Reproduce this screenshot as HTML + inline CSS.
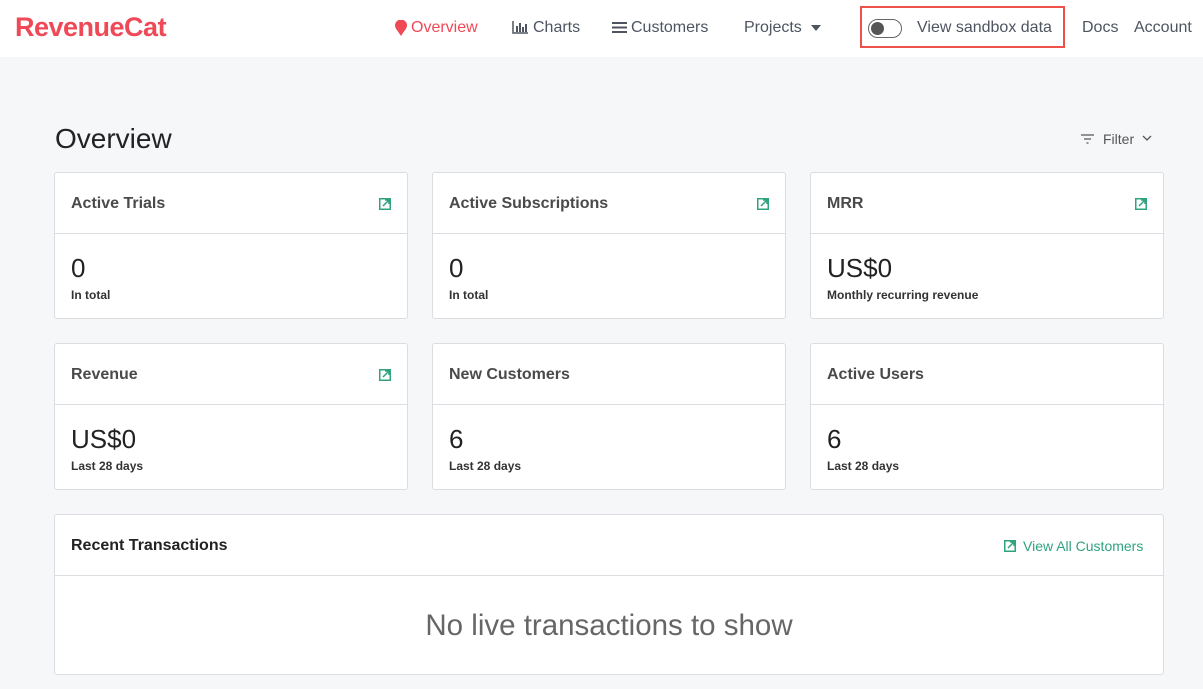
<!DOCTYPE html>
<html><head><style>
*{box-sizing:border-box;margin:0;padding:0}
body{width:1203px;height:689px;overflow:hidden;background:#f6f7f9;font-family:"Liberation Sans",sans-serif;color:#222;position:relative}
.nav{position:absolute;left:0;top:0;width:1203px;height:57px;background:#fff}
.nav span{position:absolute;top:19px;font-size:16px;color:#4e5561}
.logo{position:absolute;left:15px;top:12px;font-size:27px;font-weight:bold;color:#ef4957;letter-spacing:-0.5px}
.sb{position:absolute;left:860px;top:6px;width:205px;height:42px;border:2px solid #f0504a}
.tog{position:absolute;left:868px;top:19px;width:34px;height:19px;border:1px solid #666;border-radius:10px}
.tog i{position:absolute;left:2px;top:2px;width:13px;height:13px;border-radius:50%;background:#555}
h1{position:absolute;left:55px;top:123px;font-size:28px;font-weight:normal;color:#222}
.card{position:absolute;background:#fff;border:1px solid #dcdde0;border-radius:3px}
.card .h{height:61px;border-bottom:1px solid #dcdde0;padding:22px 16px;font-size:16px;font-weight:bold;color:#4a4a4a}
.card .v{position:absolute;left:16px;top:80px;font-size:26px;color:#222}
.card .s{position:absolute;left:16px;top:115px;font-size:12px;font-weight:bold;color:#333}
.ic{position:absolute;right:16px;top:25px;width:12px;height:12px}
</style></head><body>
<div class="nav">
<div class="logo">RevenueCat</div>
<svg style="position:absolute;left:395px;top:20px" width="12" height="16"><path d="M6 16C3 11 0 8.5 0 5.5A6 6 0 0 1 12 5.5C12 8.5 9 11 6 16Z" fill="#ef4957"/></svg>
<span style="left:411px;color:#ef4957">Overview</span>
<svg style="position:absolute;left:512px;top:21px" width="16" height="13"><path d="M1 0v12h15" stroke="#4e5561" stroke-width="1.5" fill="none"/><rect x="4" y="5" width="2" height="6" fill="#4e5561"/><rect x="7" y="2" width="2" height="9" fill="#4e5561"/><rect x="10" y="6" width="2" height="5" fill="#4e5561"/><rect x="13" y="3" width="2" height="8" fill="#4e5561"/></svg>
<span style="left:533px">Charts</span>
<svg style="position:absolute;left:612px;top:21px" width="15" height="13"><path d="M0 2h15M0 6.5h15M0 11h15" stroke="#4e5561" stroke-width="2"/></svg>
<span style="left:631px">Customers</span>
<span style="left:744px">Projects</span>
<svg style="position:absolute;left:811px;top:25px" width="10" height="6"><path d="M0 0h10L5 6Z" fill="#4e5561"/></svg>
<div class="sb"></div>
<div class="tog"><i></i></div>
<span style="left:917px">View sandbox data</span>
<span style="left:1082px">Docs</span>
<span style="left:1134px">Account</span>
</div>
<h1>Overview</h1>
<svg style="position:absolute;left:1081px;top:134px" width="13" height="10"><path d="M0 1h13M3 5h7M5.5 9h2" stroke="#555" stroke-width="1.3"/></svg>
<div style="position:absolute;left:1103px;top:131px;font-size:14px;color:#555">Filter</div>
<svg style="position:absolute;left:1142px;top:135px" width="10" height="6"><path d="M1 1l4 4 4-4" stroke="#555" stroke-width="1.3" fill="none"/></svg>
<svg width="0" height="0" style="position:absolute"><defs><g id="e"><rect x="0.75" y="0.75" width="10.5" height="10.5" fill="none" stroke="#2fa37f" stroke-width="1.5"/><path d="M4 8L10 2M6 2h4v4" stroke="#2fa37f" stroke-width="1.5" fill="none"/></g></defs></svg>

<div class="card" style="left:54px;top:172px;width:354px;height:147px"><div class="h">Active Trials</div><svg class="ic"><use href="#e"/></svg><div class="v">0</div><div class="s">In total</div></div>
<div class="card" style="left:432px;top:172px;width:354px;height:147px"><div class="h">Active Subscriptions</div><svg class="ic"><use href="#e"/></svg><div class="v">0</div><div class="s">In total</div></div>
<div class="card" style="left:810px;top:172px;width:354px;height:147px"><div class="h">MRR</div><svg class="ic"><use href="#e"/></svg><div class="v">US$0</div><div class="s">Monthly recurring revenue</div></div>
<div class="card" style="left:54px;top:343px;width:354px;height:147px"><div class="h">Revenue</div><svg class="ic"><use href="#e"/></svg><div class="v">US$0</div><div class="s">Last 28 days</div></div>
<div class="card" style="left:432px;top:343px;width:354px;height:147px"><div class="h">New Customers</div><div class="v">6</div><div class="s">Last 28 days</div></div>
<div class="card" style="left:810px;top:343px;width:354px;height:147px"><div class="h">Active Users</div><div class="v">6</div><div class="s">Last 28 days</div></div>
<div class="card" style="left:54px;top:514px;width:1110px;height:161px"><div class="h" style="color:#222">Recent Transactions</div>
<svg style="position:absolute;left:949px;top:25px;width:12px;height:12px"><use href="#e"/></svg>
<div style="position:absolute;left:968px;top:23px;font-size:14px;color:#2fa37f">View All Customers</div>
<div style="position:absolute;left:0;width:100%;top:94px;text-align:center;font-size:29.5px;color:#666">No live transactions to show</div></div>
</body></html>
